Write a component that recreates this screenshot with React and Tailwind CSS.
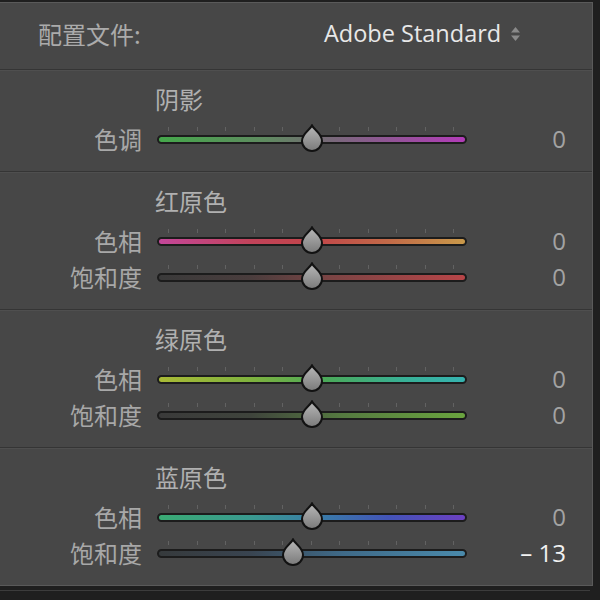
import React from 'react';

const sections = [
  {
    title: '阴影',
    rows: [
      { label: '色调', value: 0, track: 'bg-[linear-gradient(90deg,#45a84b,#5f8a60_35%,#707070_50%,#8a5a8e_70%,#b23cb8)]' },
    ],
  },
  {
    title: '红原色',
    rows: [
      { label: '色相', value: 0, track: 'bg-[linear-gradient(90deg,#c4479a,#c2435a_30%,#c2454a_50%,#c26a48_75%,#c9994a)]' },
      { label: '饱和度', value: 0, track: 'bg-[linear-gradient(90deg,#3a3a3a,#4a3d3d_30%,#7a4444_55%,#b84548)]' },
    ],
  },
  {
    title: '绿原色',
    rows: [
      { label: '色相', value: 0, track: 'bg-[linear-gradient(90deg,#a9ba36,#7fb23e_30%,#4aa95a_55%,#38b096_80%,#36b3b0)]' },
      { label: '饱和度', value: 0, track: 'bg-[linear-gradient(90deg,#3a3a3a,#3f443c_30%,#557a40_60%,#6aa43e)]' },
    ],
  },
  {
    title: '蓝原色',
    rows: [
      { label: '色相', value: 0, track: 'bg-[linear-gradient(90deg,#3aab74,#3a9a90_30%,#3a78aa_55%,#4354b8_75%,#6c40c2)]' },
      { label: '饱和度', value: -13, track: 'bg-[linear-gradient(90deg,#363a3c,#394450_30%,#3f6a88_60%,#4a8aab)]' },
    ],
  },
];

const cjk = "font-['Noto_Sans_CJK_SC',sans-serif]";

const Thumb = () => (
  <svg width="24" height="28" viewBox="0 0 24 28">
    <defs>
      <linearGradient id="thumbFill" x1="0" y1="0" x2="0" y2="1">
        <stop offset="0" stopColor="#b8b8b8" />
        <stop offset="1" stopColor="#7a7a7a" />
      </linearGradient>
    </defs>
    <path
      d="M12 1.5 C14 6 22 9.5 22 17 A10 10 0 0 1 2 17 C2 9.5 10 6 12 1.5 Z"
      fill="url(#thumbFill)"
      stroke="#121212"
      strokeWidth="2"
    />
  </svg>
);

const Slider = ({ value, track }) => {
  const ticks = Array.from({ length: 11 }, (_, i) => 11 + i * 28.5);
  const center = 155 + value * 1.46;
  return (
    <div className="relative w-[310px] h-[36px]">
      {ticks.map((x, i) => (
        <div key={i} className="absolute top-[6px] w-px h-[4px] bg-[#626262]" style={{ left: x }} />
      ))}
      <div className={`absolute left-0 right-0 top-[14px] h-[9px] rounded-full border-2 border-[#1c1c1c] ${track}`} />
      <div className="absolute top-[3px]" style={{ left: center - 12 }}>
        <Thumb />
      </div>
    </div>
  );
};

const Row = ({ label, value, track }) => (
  <div className="flex items-center h-[36px]">
    <div className={`w-[142px] text-right text-[24px] leading-none text-[#a8a8a8] ${cjk}`}>{label}</div>
    <div className="ml-[15px]">
      <Slider value={value} track={track} />
    </div>
    <div
      className={`w-[99px] text-right text-[24px] leading-none font-['Open_Sans',sans-serif] ${
        value === 0 ? 'text-[#a3a3a3]' : 'text-[#f2f2f2]'
      }`}
    >
      {value === 0 ? '0' : `– ${Math.abs(value)}`}
    </div>
  </div>
);

const Section = ({ title, rows }) => (
  <div className="border-t border-[#353535] shadow-[inset_0_1px_0_#4f4f4f] pt-[15px] pb-[14px]">
    <div className={`h-[28px] pl-[155px] flex items-center text-[24px] leading-none text-[#b0b0b0] ${cjk}`}>{title}</div>
    <div className="mt-[8px]">
      {rows.map((r, i) => (
        <Row key={i} {...r} />
      ))}
    </div>
  </div>
);

export default function App() {
  return (
    <div className="w-[600px] h-[600px] bg-[#1f1f1f] pt-[2px] overflow-hidden">
      <div className="w-[593px] h-[584px] bg-[#474747] border-t border-r border-b border-[#5a5a5a] flex flex-col">
        <div className="h-[67px] pb-[5px] flex items-center">
          <div className={`pl-[38px] w-[300px] text-[24px] leading-none text-[#ababab] ${cjk}`}>配置文件:</div>
          <div className="ml-[24px] flex items-center">
            <span className="text-[23.5px] leading-none text-[#e8e8e8] font-['Open_Sans',sans-serif]">Adobe Standard</span>
            <svg className="ml-[9px]" width="11" height="18" viewBox="0 0 11 18">
              <path d="M5.5 2 L10 7.5 L1 7.5 Z" fill="#8a8a8a" />
              <path d="M5.5 16 L10 10.5 L1 10.5 Z" fill="#8a8a8a" />
            </svg>
          </div>
        </div>
        {sections.map((s, i) => (
          <Section key={i} {...s} />
        ))}
      </div>
      <div className="w-[590px] mt-[4px] h-px bg-[#3c3c3c]" />
    </div>
  );
}
